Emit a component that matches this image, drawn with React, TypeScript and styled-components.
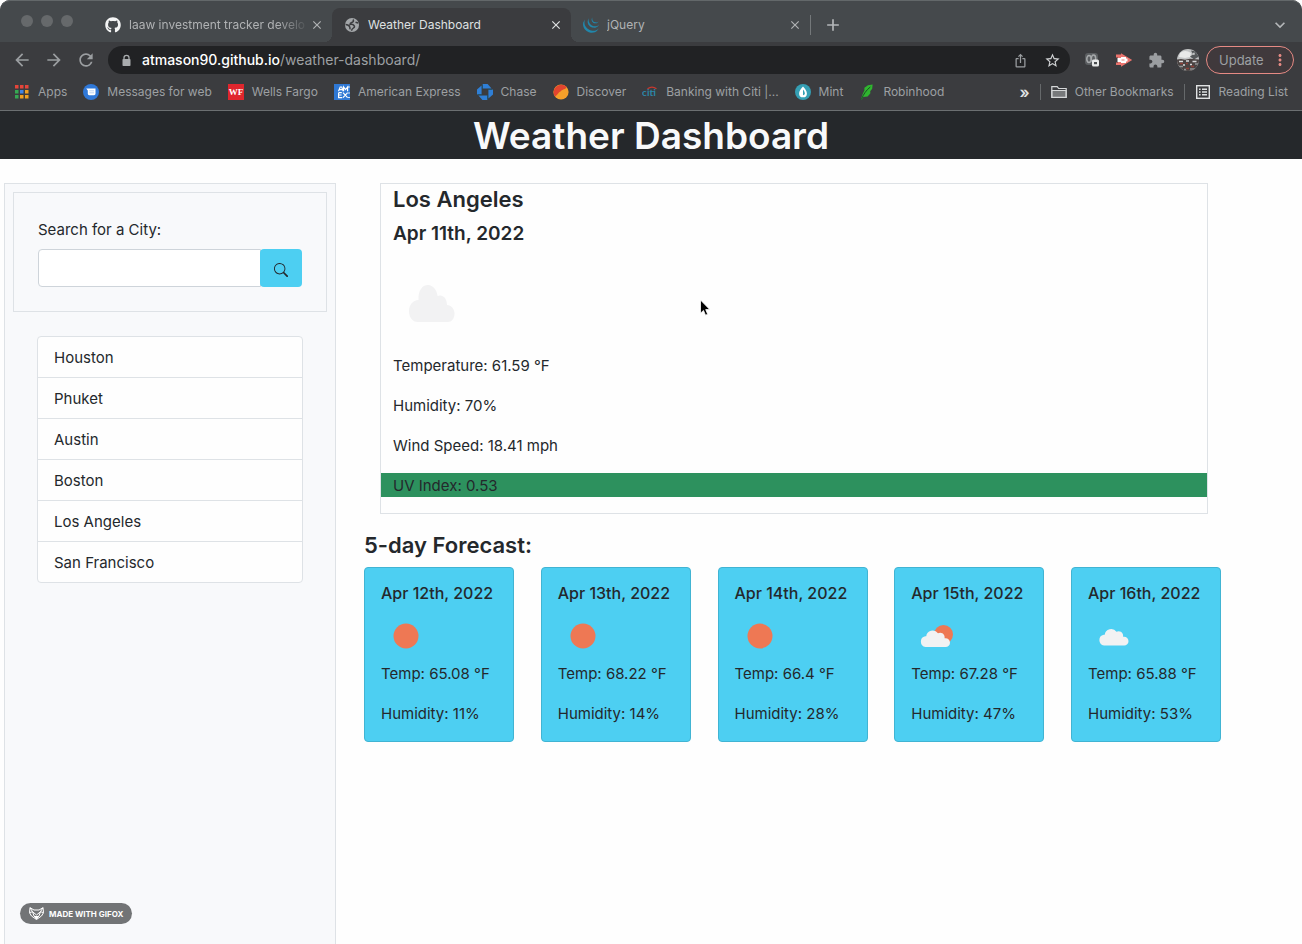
import React from "react";
import styled, { createGlobalStyle } from "styled-components";
import { FaGithub } from "react-icons/fa";
import { SiJquery } from "react-icons/si";
import { BsSearch } from "react-icons/bs";
import {
  MdAdd,
  MdArrowBack,
  MdArrowForward,
  MdClose,
  MdExpandMore,
  MdExtension,
  MdIosShare,
  MdMoreVert,
  MdRefresh,
  MdStarBorder,
} from "react-icons/md";

const color = {
  strip: "#45494c",
  toolbar: "#3b3c3f",
  omnibox: "#212224",
  chromeText: "#9da0a3",
  chromeIcon: "#9b9ea1",
  header: "#25282b",
  text: "#24282c",
  border: "#dee2e6",
  info: "#4dcff2",
  uv: "#2d915e",
  panel: "#f8f9fb",
};

const GlobalStyle = createGlobalStyle`
  *, *::before, *::after { box-sizing: border-box; }
  body {
    margin: 0;
    background: #fefefe;
    color: ${color.text};
    font-family: Inter, "Liberation Sans", sans-serif;
    font-size: 15px;
    line-height: 24px;
  }
  h1, h2, h3, h4, p, ul { margin: 0; padding: 0; font-weight: 400; }
  ul { list-style: none; }
  button { font: inherit; color: inherit; border: 0; background: none; padding: 0; }
  a { color: inherit; text-decoration: none; }
  svg { display: block; flex: none; }
`;

const Page = styled.div`
  position: relative;
  min-height: 100vh;
  display: flex;
  flex-direction: column;
`;

/* ---------- browser window ---------- */

const Browser = styled.div`
  background: ${color.toolbar};
  border-bottom: 1px solid #6b6f71;
  border-radius: 10px 10px 0 0;
  color: ${color.chromeText};
  font-size: 12px;
  line-height: 16px;
  white-space: nowrap;
`;

const TabStrip = styled.div`
  display: flex;
  height: 42px;
  background: ${color.strip};
  border-top: 1px solid #63686a;
  border-radius: 10px 10px 0 0;
  padding-right: 12px;
`;

const Lights = styled.div`
  display: flex;
  align-items: center;
  gap: 8px;
  width: 93px;
  height: 40px;
  padding-left: 21px;
`;

const Light = styled.span`
  width: 12px;
  height: 12px;
  border-radius: 50%;
  background: #66696b;
`;

const Tab = styled.div<{ $active?: boolean }>`
  position: relative;
  display: flex;
  align-items: center;
  flex: 0 1 239px;
  min-width: 0;
  margin-top: 7px;
  padding: 0 8px 0 12px;
  border-radius: 8px 8px 0 0;
  color: ${(p) => (p.$active ? "#dfe1e2" : "#b0b2b4")};
  background: ${(p) => (p.$active ? color.toolbar : "transparent")};

  &::before,
  &::after {
    content: ${(p) => (p.$active ? '""' : "none")};
    position: absolute;
    bottom: 0;
    width: 8px;
    height: 8px;
  }
  &::before {
    left: -8px;
    background: radial-gradient(circle at 0 0, transparent 8px, ${color.toolbar} 8px);
  }
  &::after {
    right: -8px;
    background: radial-gradient(circle at 100% 0, transparent 8px, ${color.toolbar} 8px);
  }
`;

const TabTitle = styled.span<{ $fade?: boolean }>`
  flex: 1;
  min-width: 0;
  margin: 0 1px 0 8px;
  overflow: hidden;
  mask-image: ${(p) =>
    p.$fade ? "linear-gradient(to right, #000 calc(100% - 32px), transparent)" : "none"};
`;

const TabDivider = styled.span`
  align-self: center;
  width: 1px;
  height: 20px;
  margin-top: 7px;
  background: #74787a;
`;

const StripButton = styled.button<{ $end?: boolean }>`
  margin: 7px 0 0 ${(p) => (p.$end ? "auto" : "12px")};
  color: #b4b7b9;
`;

const Toolbar = styled.div`
  display: flex;
  align-items: center;
  height: 36px;
  padding: 0 8px 0 6px;
`;

const ToolButton = styled.button`
  display: flex;
  align-items: center;
  justify-content: center;
  flex: none;
  width: 32px;
  height: 28px;
  color: ${color.chromeIcon};
`;

const Omnibox = styled.div`
  display: flex;
  align-items: center;
  flex: 1;
  min-width: 0;
  height: 28px;
  margin: 0 6px;
  padding: 0 2px 0 12px;
  border-radius: 14px;
  background: ${color.omnibox};
`;

const Address = styled.span`
  flex: 1;
  min-width: 0;
  margin-left: 9px;
  overflow: hidden;
  font-size: 14px;
`;

const Host = styled.span`
  color: #fff;
  font-weight: 500;
`;

const UpdateButton = styled.button`
  display: flex;
  align-items: center;
  justify-content: space-between;
  flex: none;
  width: 88px;
  height: 28px;
  margin-left: 2px;
  padding: 0 4px 0 12px;
  border: 1px solid #e58a84;
  border-radius: 14px;
  background: #40393c;
  font-size: 13px;
`;

const BookmarkBar = styled.nav`
  display: flex;
  align-items: center;
  gap: 16px;
  height: 32px;
  padding: 0 14px 4px 14px;
`;

const Bookmark = styled.a`
  display: flex;
  align-items: center;
  gap: 8px;
`;

const BookmarkGroup = styled.div`
  display: flex;
  align-items: center;
  gap: 10px;
  margin-left: auto;
`;

const Overflow = styled.button`
  font-size: 16px;
  font-weight: 600;
  color: #e0e2e3;
`;

const BarDivider = styled.span`
  width: 1px;
  height: 16px;
  background: #66696b;
`;

/* ---------- weather page ---------- */

const Header = styled.header`
  background: ${color.header};
  color: #f8f9fa;
  text-align: center;
`;

const Title = styled.h1`
  padding-top: 2px;
  font-size: 37px;
  line-height: 46px;
  font-weight: 600;
`;

const Columns = styled.div`
  display: flex;
  flex: 1;
  padding: 24px 81px 0 4px;
`;

const Sidebar = styled.aside`
  flex: 0 0 28%;
  min-width: 260px;
  max-width: 332px;
  padding: 8px;
  border: 1px solid ${color.border};
  border-bottom: 0;
  background: ${color.panel};
`;

const SearchForm = styled.form`
  padding: 24px;
  border: 1px solid ${color.border};
`;

const SearchLabel = styled.label`
  display: block;
  margin-bottom: 8px;
  padding-top: 2px;
  line-height: 22px;
`;

const SearchRow = styled.div`
  display: flex;
  height: 38px;
`;

const SearchInput = styled.input`
  flex: 1;
  min-width: 0;
  padding: 6px 12px;
  border: 1px solid #ced4da;
  border-radius: 4px 0 0 4px;
  background: #fff;
  font: inherit;
`;

const SearchButton = styled.button`
  display: flex;
  align-items: center;
  justify-content: center;
  width: 42px;
  margin-left: -1px;
  padding-top: 4px;
  border-radius: 4px;
  background: ${color.info};
`;

const CityList = styled.ul`
  margin: 24px;
  border: 1px solid ${color.border};
  border-radius: 4px;
  background: #fefefe;
`;

const CityItem = styled.li`
  & + & {
    border-top: 1px solid ${color.border};
  }
`;

const CityButton = styled.button`
  display: block;
  width: 100%;
  padding: 9px 16px 7px;
  text-align: left;
`;

const Main = styled.main`
  flex: 1;
  min-width: 0;
  margin-left: 28px;
`;

const Current = styled.section`
  display: flex;
  flex-direction: column;
  margin: 0 13px 16px 16px;
  border: 1px solid ${color.border};
`;

const SectionTitle = styled.h2<{ $inset?: boolean }>`
  margin-bottom: 8px;
  padding: 2px ${(p) => (p.$inset ? "12px" : "0")} 0;
  font-size: 22px;
  line-height: 27px;
  font-weight: 600;
`;

const CurrentDate = styled.h3`
  margin-bottom: 8px;
  padding: 2px 12px 0;
  font-size: 19px;
  line-height: 22px;
  font-weight: 600;
`;

const CurrentIcon = styled.div`
  padding: 0 12px;
`;

const Reading = styled.p<{ $uv?: boolean }>`
  margin-bottom: 16px;
  padding: 2px 12px 0;
  line-height: 22px;
  background: ${(p) => (p.$uv ? color.uv : "transparent")};
`;

const Forecast = styled.div`
  display: flex;
  justify-content: space-between;
`;

const Card = styled.article`
  flex: 0 0 150px;
  padding: 16px;
  border: 1px solid #41b4d3;
  border-radius: 4px;
  background: ${color.info};
  white-space: nowrap;
`;

const CardDate = styled.h4`
  margin-bottom: 8px;
  font-size: 16px;
  line-height: 19px;
  font-weight: 500;
`;

const CardLine = styled.p`
  padding-top: 2px;
  line-height: 22px;

  & + & {
    margin-top: 16px;
  }
`;

const Cursor = styled.svg`
  position: absolute;
  left: 699px;
  top: 299px;
`;

const Badge = styled.a`
  position: absolute;
  left: 20px;
  bottom: 20px;
  display: flex;
  align-items: center;
  gap: 5px;
  width: 112px;
  height: 21px;
  padding-left: 9px;
  border-radius: 11px;
  background: #727476;
  color: #fff;
  font-size: 8px;
  line-height: 10px;
  font-weight: 700;
  white-space: nowrap;
`;

/* ---------- drawings ---------- */

const AppsIcon = () => {
  const fills = ["#e5453a", "#e5453a", "#e5453a", "#36a853", "#3f84e5", "#f0a020", "#36a853", "#f0a020", "#f0a020"];
  return (
    <svg width="16" height="16" viewBox="0 0 16 16">
      {fills.map((f, i) => (
        <rect key={i} x={1 + (i % 3) * 5} y={1 + Math.floor(i / 3) * 5} width="3.500" height="3.500" fill={f} />
      ))}
    </svg>
  );
};

const GlobeIcon = () => (
  <svg width="16" height="16" viewBox="0 0 16 16">
    <circle cx="8" cy="8" r="7" fill="#a3a6a9" />
    <path
      d="M8.800 2.600Q10.500 4.200 8.200 5.200T6 7.400q2.800-.4 4 1t-.6 2.600-1.800 2.800M1.600 7.400q2.600.2 3.600 1.600t.8 3.400M11.500 5.200l2.600.8"
      fill="none"
      stroke={color.toolbar}
      strokeWidth="1.500"
    />
  </svg>
);

const LockIcon = () => (
  <svg width="13" height="13" viewBox="0 0 13 13">
    <path d="M4 6V3.800a2.500 2.500 0 0 1 5 0V6" fill="none" stroke="#a9acae" strokeWidth="1.300" />
    <rect x="2.500" y="5" width="8" height="7" rx=".8" fill="#a9acae" />
  </svg>
);

const MessagesIcon = () => (
  <svg width="16" height="16" viewBox="0 0 16 16">
    <circle cx="8" cy="8" r="8" fill="#2f78d8" />
    <path d="M3.200 4.600h9.300v5.200q0 1.400-1.400 1.400H6.200q-1.400 0-1.400-1.400V6.400z" fill="#fff" />
    <path d="M6.300 6.800h4.800M6.300 8.800h4.800" stroke="#9cc0ee" strokeWidth=".7" />
  </svg>
);

const WellsIcon = () => (
  <svg width="16" height="16" viewBox="0 0 16 16">
    <rect width="16" height="16" fill="#e0262d" />
    <text x="8" y="11" textAnchor="middle" fontFamily="Liberation Serif, serif" fontWeight="700" fontSize="9" fill="#fff">
      WF
    </text>
  </svg>
);

const AmexIcon = () => (
  <svg width="16" height="16" viewBox="0 0 16 16">
    <rect width="16" height="16" fill="#2f78d4" />
    <path
      d="M4.500 7.200 6.200 3h1.500l1.600 4.200M5.400 5.700h3M9.600 7.200V3l2 2.600 2-2.600v4.200M4.600 8.700h3.200M4.600 8.700v5h3.600M4.600 11h3M9 8.700l4.600 5M13.600 8.700 9 13.700M14.200 3h1.600M14.200 9h1.600M14.200 13.500h1.600"
      fill="none"
      stroke="#fff"
      strokeWidth="1.200"
    />
  </svg>
);

const ChaseIcon = () => (
  <svg width="16" height="16" viewBox="0 0 16 16">
    <g fill="#2f7fd6">
      {[0, 90, 180, 270].map((r) => (
        <path key={r} d="M5.600 0h5l4 4.600h-9z" transform={`rotate(${r} 8 8)`} />
      ))}
    </g>
    <g stroke="#1d4f66" strokeWidth=".8">
      {[0, 90, 180, 270].map((r) => (
        <path key={r} d="M5.400.6v4.600" transform={`rotate(${r} 8 8)`} />
      ))}
    </g>
    <rect x="5.200" y="5.200" width="5.600" height="5.600" fill={color.toolbar} />
  </svg>
);

const DiscoverIcon = () => (
  <svg width="16" height="16" viewBox="0 0 16 16">
    <circle cx="8" cy="8" r="7.600" fill="#f5a02a" />
    <path d="M2 12.600A7.600 7.600 0 0 1 13.600 2.900C13 5.500 9 5 7.500 7.500 5.500 8 4.500 11 2 12.600z" fill="#e2452f" />
  </svg>
);

const CitiIcon = () => (
  <svg width="16" height="16" viewBox="0 0 16 16">
    <text x="7" y="12" textAnchor="middle" fontFamily="Lato, sans-serif" fontWeight="700" fontSize="10" fill="#2b86a8">
      citi
    </text>
    <path d="M5.500 4.800Q10 1.400 14.500 4.800" fill="none" stroke="#c8382f" strokeWidth="1.200" />
  </svg>
);

const MintIcon = () => (
  <svg width="16" height="16" viewBox="0 0 16 16">
    <circle cx="8" cy="8" r="8" fill="#359fb4" />
    <path d="M8 2.400c2.200 2.400 3.900 4.600 3.900 7A3.900 3.900 0 0 1 8 13.300a3.900 3.900 0 0 1-3.900-3.900c0-2.400 1.700-4.600 3.900-7z" fill="#fff" />
    <path d="M8 5.600c1.200 1.500 1.800 2.600 1.800 3.800A1.800 1.800 0 0 1 8 11.200z" fill="#359fb4" />
  </svg>
);

const RobinhoodIcon = () => (
  <svg width="16" height="16" viewBox="0 0 16 16">
    <path d="M2 15.600C3 11.500 4.200 8.500 5.400 6.500V3.800L9 1.200 13.600.500l-.4 4.200-2 2.600.2 2-2.800 3.200-4.400.6-1.400 2.500z" fill="#2fb62f" />
    <path d="M2.300 15.500C4.600 10 7.400 6 11.300 3" fill="none" stroke="#1d4a26" strokeWidth="1" />
  </svg>
);

const FolderIcon = () => (
  <svg width="16" height="16" viewBox="0 0 16 16" fill="none" stroke="#d6d8d9" strokeWidth="1.200">
    <path d="M.8 13.400V2.600h5.400l1.500 1.900h7.500v8.900z" />
    <path d="M1 6.500h14v6.800H1z" fill="#77797b" />
  </svg>
);

const ReadingListIcon = () => (
  <svg width="16" height="16" viewBox="0 0 16 16" fill="none" stroke="#e0e2e3" strokeWidth="1.400">
    <rect x="1.700" y="1.700" width="12.600" height="12.600" />
    <path d="M4 5.200h1.600M4 8h1.600M4 10.800h1.600M7 5.200h5M7 8h5M7 10.800h5" />
  </svg>
);

const RecorderIcon = () => (
  <svg width="16" height="16" viewBox="0 0 16 16">
    <rect x="1" y="1" width="13" height="12" rx="3" fill="#5b5e61" />
    <ellipse cx="5" cy="7" rx="2.200" ry="3.400" fill="none" stroke="#a6a9ab" strokeWidth="1.500" />
    <ellipse cx="9.500" cy="6.500" rx="2.200" ry="3.400" fill="none" stroke="#a6a9ab" strokeWidth="1.500" />
    <rect x="8" y="7.500" width="7" height="7" rx="1.500" fill="#e9eaea" />
    <path d="M10 10h3v2.200h-3z" fill="#4b4e50" />
  </svg>
);

const PlayIcon = () => (
  <svg width="18" height="16" viewBox="0 0 18 16">
    <path d="M1 2.500h5V1.200L17.200 8 6 14.800V13H1v-2.500h2v-5H1z" fill="#e9736d" />
    <path d="M2.500 6H6V5h5v1.500h1.500v3H11V11H6v-1H2.500z" fill="#fff" />
    <path d="M6.500 7.300h3v1.400h-3z" fill="#f0a29e" />
  </svg>
);

const Avatar = () => (
  <svg width="22" height="22" viewBox="0 0 22 22">
    <clipPath id="avatar-clip">
      <circle cx="11" cy="11" r="11" />
    </clipPath>
    <g clipPath="url(#avatar-clip)">
      <rect width="22" height="22" fill="#c2c4c5" />
      <path d="M3 4q5-4 11 0l-1 4-5 1-6-1z" fill="#e8e9e9" />
      <path d="M14 1.500l5 1 3 5-5 3-4-3 3-2z" fill="#55585a" />
      <path d="M15.500 4l2-.5.5 2-2 .5z" fill="#c2c4c5" />
      <path d="M0 10.500 4 10l4 .8 5-1 9 .8V22H0z" fill="#4a4342" />
      <path d="M2 12.500h4M9 12h3M15.500 12.500h4M6 16h2M13 15.500h2" stroke="#d9dadb" strokeWidth="1.500" />
      <path d="M3 14.500h3M9 14.500h2M14 17.500h3M9 19.500h3" stroke="#8d4038" strokeWidth="1.600" />
      <path d="M1 17.500h5M7 20.500h2M13 20h5M18 15h3" stroke="#909394" strokeWidth="1.500" />
    </g>
  </svg>
);

const FoxIcon = () => (
  <svg width="15" height="13" viewBox="0 0 15 13" fill="none" stroke="#fff" strokeWidth="1" strokeLinejoin="round">
    <path d="M1 .7 5 3h5l4-2.300.5 5L12.500 9 7.500 12.500 2.500 9 .5 5.700z" />
    <path d="M1 .7l2.500 4L7.500 8l4-3.300 2.500-4M.5 5.700l3-1L5 9M14.500 5.700l-3-1L10 9M5 9l2.500 2L10 9" />
    <path d="M5.500 9.500h4l-2 2.700z" fill="#fff" />
  </svg>
);

const CLOUD_PATH =
  "M5.500 18.600A5.500 5.500 0 0 1 5.200 7.800h1A6.500 6.500 0 0 1 18 4.800a4.400 4.400 0 0 1 6.600 3.800v1.200h1a4.400 4.400 0 0 1 0 8.800z";

type Sky = "sun" | "partly" | "cloud";

const SkyIcon = ({ sky }: { sky: Sky }) => (
  <svg width="50" height="50" viewBox="0 0 50 50" role="img" aria-label={sky}>
    {sky === "sun" && <circle cx="25" cy="25" r="12.500" fill="#ee7854" />}
    {sky === "partly" && (
      <>
        <circle cx="32.500" cy="23.500" r="9.500" fill="#ee7854" />
        <path d={CLOUD_PATH} transform="translate(9 17.500)" fill="#f2f2f3" />
      </>
    )}
    {sky === "cloud" && <path d={CLOUD_PATH} transform="translate(10.500 16)" fill="#f2f2f3" />}
  </svg>
);

const BigCloud = () => (
  <svg width="80" height="100" viewBox="0 0 80 100" role="img" aria-label="cloud">
    <path
      d="M25 69C19 69 16 64 16 58c0-6 4-11 9.500-11C25 38 29 32 35 32c5 0 9 5 9.500 11 5-2 9.500 2 9.500 9 4 0 7.500 4 7.500 8.500 0 5-3 8.500-6.500 8.500z"
      fill="#f2f2f3"
    />
  </svg>
);

/* ---------- data ---------- */

const bookmarks = [
  { label: "Apps", icon: <AppsIcon /> },
  { label: "Messages for web", icon: <MessagesIcon /> },
  { label: "Wells Fargo", icon: <WellsIcon /> },
  { label: "American Express", icon: <AmexIcon /> },
  { label: "Chase", icon: <ChaseIcon /> },
  { label: "Discover", icon: <DiscoverIcon /> },
  { label: "Banking with Citi |...", icon: <CitiIcon /> },
  { label: "Mint", icon: <MintIcon /> },
  { label: "Robinhood", icon: <RobinhoodIcon /> },
];

const cities = ["Houston", "Phuket", "Austin", "Boston", "Los Angeles", "San Francisco"];

const forecast: { date: string; sky: Sky; temp: string; humidity: number }[] = [
  { date: "Apr 12th, 2022", sky: "sun", temp: "65.08", humidity: 11 },
  { date: "Apr 13th, 2022", sky: "sun", temp: "68.22", humidity: 14 },
  { date: "Apr 14th, 2022", sky: "sun", temp: "66.4", humidity: 28 },
  { date: "Apr 15th, 2022", sky: "partly", temp: "67.28", humidity: 47 },
  { date: "Apr 16th, 2022", sky: "cloud", temp: "65.88", humidity: 53 },
];

const CloseButton = () => (
  <button aria-label="Close tab">
    <MdClose size={14} />
  </button>
);

export default function App() {
  return (
    <Page>
      <GlobalStyle />
      <Browser>
        <TabStrip>
          <Lights>
            <Light />
            <Light />
            <Light />
          </Lights>
          <Tab>
            <FaGithub size={16} color="#f4f5f5" />
            <TabTitle $fade>laaw investment tracker develo</TabTitle>
            <CloseButton />
          </Tab>
          <Tab $active>
            <GlobeIcon />
            <TabTitle>Weather Dashboard</TabTitle>
            <CloseButton />
          </Tab>
          <Tab>
            <SiJquery size={16} color="#2187ab" />
            <TabTitle>jQuery</TabTitle>
            <CloseButton />
          </Tab>
          <TabDivider />
          <StripButton aria-label="New tab">
            <MdAdd size={20} />
          </StripButton>
          <StripButton aria-label="Search tabs" $end>
            <MdExpandMore size={20} />
          </StripButton>
        </TabStrip>
        <Toolbar>
          <ToolButton aria-label="Back">
            <MdArrowBack size={20} />
          </ToolButton>
          <ToolButton aria-label="Forward">
            <MdArrowForward size={20} />
          </ToolButton>
          <ToolButton aria-label="Reload">
            <MdRefresh size={20} />
          </ToolButton>
          <Omnibox>
            <LockIcon />
            <Address>
              <Host>atmason90.github.io</Host>/weather-dashboard/
            </Address>
            <ToolButton aria-label="Share">
              <MdIosShare size={15} />
            </ToolButton>
            <ToolButton aria-label="Bookmark this page">
              <MdStarBorder size={17} color="#d0d2d3" />
            </ToolButton>
          </Omnibox>
          <ToolButton aria-label="Recorder extension">
            <RecorderIcon />
          </ToolButton>
          <ToolButton aria-label="Player extension">
            <PlayIcon />
          </ToolButton>
          <ToolButton aria-label="Extensions">
            <MdExtension size={17} />
          </ToolButton>
          <ToolButton aria-label="Profile">
            <Avatar />
          </ToolButton>
          <UpdateButton>
            Update
            <MdMoreVert size={18} color="#e58a84" />
          </UpdateButton>
        </Toolbar>
        <BookmarkBar>
          {bookmarks.map((b) => (
            <Bookmark key={b.label} href="#">
              {b.icon}
              {b.label}
            </Bookmark>
          ))}
          <BookmarkGroup>
            <Overflow aria-label="More bookmarks">»</Overflow>
            <BarDivider />
            <Bookmark href="#">
              <FolderIcon />
              Other Bookmarks
            </Bookmark>
            <BarDivider />
            <Bookmark href="#">
              <ReadingListIcon />
              Reading List
            </Bookmark>
          </BookmarkGroup>
        </BookmarkBar>
      </Browser>

      <Header>
        <Title>Weather Dashboard</Title>
      </Header>

      <Columns>
        <Sidebar>
          <SearchForm onSubmit={(e) => e.preventDefault()}>
            <SearchLabel htmlFor="city">Search for a City:</SearchLabel>
            <SearchRow>
              <SearchInput id="city" type="text" />
              <SearchButton type="submit" aria-label="Search">
                <BsSearch size={14} />
              </SearchButton>
            </SearchRow>
          </SearchForm>
          <CityList>
            {cities.map((city) => (
              <CityItem key={city}>
                <CityButton>{city}</CityButton>
              </CityItem>
            ))}
          </CityList>
        </Sidebar>

        <Main>
          <Current>
            <SectionTitle $inset>Los Angeles</SectionTitle>
            <CurrentDate>Apr 11th, 2022</CurrentDate>
            <CurrentIcon>
              <BigCloud />
            </CurrentIcon>
            <Reading>Temperature: 61.59 °F</Reading>
            <Reading>Humidity: 70%</Reading>
            <Reading>Wind Speed: 18.41 mph</Reading>
            <Reading $uv>UV Index: 0.53</Reading>
          </Current>

          <SectionTitle>5-day Forecast:</SectionTitle>
          <Forecast>
            {forecast.map((day) => (
              <Card key={day.date}>
                <CardDate>{day.date}</CardDate>
                <SkyIcon sky={day.sky} />
                <CardLine>Temp: {day.temp} °F</CardLine>
                <CardLine>Humidity: {day.humidity}%</CardLine>
              </Card>
            ))}
          </Forecast>
        </Main>
      </Columns>

      <Cursor width="12" height="18" viewBox="0 0 12 18">
        <path d="M1.500 1v13.200l3-2.800 2 4.800 2.200-.9-2-4.700h4.100z" fill="#000" stroke="#fff" strokeWidth=".8" />
      </Cursor>
      <Badge href="#">
        <FoxIcon />
        MADE WITH GIFOX
      </Badge>
    </Page>
  );
}
